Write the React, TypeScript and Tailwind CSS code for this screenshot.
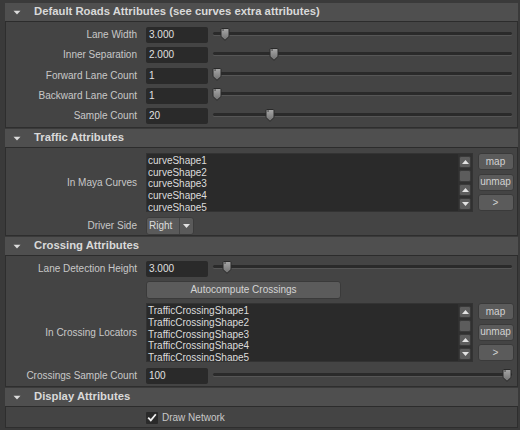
import React from "react";

const FONT = "font-['Liberation_Sans',Arial,sans-serif]";

function Tri() {
  return (
    <svg width="8" height="5" viewBox="0 0 8 5">
      <path d="M0.5 0.8 H7.5 L4 4.4 Z" fill="#dcdcdc" />
    </svg>
  );
}

function Header({ title }: { title: string }) {
  return (
    <div className="h-[19px] shrink-0 bg-[#4f4f4f] border-b border-[#2c2c2c] flex items-center">
      <div className="w-[29px] pl-[8px] flex items-center">
        <Tri />
      </div>
      <span className="text-[11.3px] font-bold text-[#d9d9d9] leading-none">{title}</span>
    </div>
  );
}

function Handle() {
  return (
    <svg width="10" height="13" viewBox="0 0 10 13">
      <defs>
        <linearGradient id="hg" x1="0" y1="0" x2="0" y2="1">
          <stop offset="0" stopColor="#a8a8a8" />
          <stop offset="1" stopColor="#6e6e6e" />
        </linearGradient>
      </defs>
      <path d="M1 1.5 Q1 0.5 2 0.5 H8 Q9 0.5 9 1.5 V8.5 L5 12.3 L1 8.5 Z" fill="url(#hg)" stroke="#2a2a2a" strokeWidth="1" />
      <path d="M2.2 2 H4" stroke="#3a3a3a" strokeWidth="1" />
    </svg>
  );
}

function Slider({ at }: { at: number }) {
  return (
    <div className="relative ml-[5px] mr-[5px] flex-1 h-[16px]">
      <div className="mt-[4.5px] h-[3px] rounded-full bg-[#2a2a2a] shadow-[0_1px_0_#565656]" />
      <div className="absolute top-[0.5px]" style={{ left: at - 5 }}>
        <Handle />
      </div>
    </div>
  );
}

function Label({ children }: { children?: React.ReactNode }) {
  return <div className="w-[131px] shrink-0 text-right text-[10px] text-[#c8c8c8] leading-none">{children}</div>;
}

function Field({ value }: { value: string }) {
  return (
    <div className="ml-[9px] h-[16px] w-[62px] shrink-0 bg-[#2a2a2a] rounded-[2px] flex items-center pl-[3px] text-[10px] text-[#e0e0e0] leading-none">
      {value}
    </div>
  );
}

function SliderRow({ label, value, at }: { label: string; value: string; at: number }) {
  return (
    <div className="flex items-center h-[16px]">
      <Label>{label}</Label>
      <Field value={value} />
      <Slider at={at} />
    </div>
  );
}

function Arrow({ down }: { down?: boolean }) {
  return (
    <svg width="7" height="4" viewBox="0 0 7 4">
      <path d={down ? "M0 0 H7 L3.5 4 Z" : "M0 4 H7 L3.5 0 Z"} fill="#e2e2e2" />
    </svg>
  );
}

function ScrollBtn({ children }: { children?: React.ReactNode }) {
  return (
    <div className="h-[12px] w-[12px] bg-[#5c5c5c] rounded-[2px] border border-[#3a3a3a] flex items-center justify-center">
      {children}
    </div>
  );
}

function Btn({ children }: { children: React.ReactNode }) {
  return (
    <div className="h-[17px] w-[36px] bg-[#5b5b5b] rounded-[3px] border border-[#3a3a3a] flex items-center justify-center text-[10px] text-[#d2d2d2] leading-none">
      {children}
    </div>
  );
}

function ListRow({ label, items }: { label: string; items: string[] }) {
  return (
    <div className="flex items-center">
      <Label>{label}</Label>
      <div className="ml-[9px] flex h-[59px] w-[327px] border border-[#333333] bg-[#2a2a2a]">
        <div className="flex-1 overflow-hidden pl-[1px] text-[10px] leading-[11.7px] text-[#dcdcdc] pt-[1px]">
          {items.map((i) => (
            <div key={i} className="whitespace-nowrap">{i}</div>
          ))}
        </div>
        <div className="w-[14px] bg-[#303030] flex flex-col items-center gap-[2px] pt-[1.5px]">
          <ScrollBtn><Arrow /></ScrollBtn>
          <ScrollBtn />
          <ScrollBtn><Arrow /></ScrollBtn>
          <ScrollBtn><Arrow down /></ScrollBtn>
        </div>
      </div>
      <div className="ml-[4.5px] flex flex-col gap-[3.5px] self-start">
        <Btn>map</Btn>
        <Btn>unmap</Btn>
        <Btn>&gt;</Btn>
      </div>
    </div>
  );
}

const Content = ({ children, className }: { children: React.ReactNode; className: string }) => (
  <div className={"shrink-0 bg-[#444444] border-x border-b border-[#2e2e2e] flex flex-col " + className}>{children}</div>
);

export default function App() {
  return (
    <div className={`${FONT} w-[520px] h-[430px] overflow-hidden bg-[#3a3a3a] pt-[3px] pl-[5px] pr-[2px] flex flex-col`}>
      <Header title="Default Roads Attributes (see curves extra attributes)" />
      <Content className="h-[106px] pt-[5px] gap-[4.33px]">
        <SliderRow label="Lane Width" value="3.000" at={12} />
        <SliderRow label="Inner Separation" value="2.000" at={61} />
        <SliderRow label="Forward Lane Count" value="1" at={4} />
        <SliderRow label="Backward Lane Count" value="1" at={4} />
        <SliderRow label="Sample Count" value="20" at={57} />
      </Content>
      <div className="h-px shrink-0" />
      <Header title="Traffic Attributes" />
      <Content className="h-[88px] pt-[5px] gap-[4.5px]">
        <ListRow label="In Maya Curves" items={["curveShape1", "curveShape2", "curveShape3", "curveShape4", "curveShape5"]} />
        <div className="flex items-center">
          <Label>Driver Side</Label>
          <div className="ml-[9px] h-[18px] w-[48px] rounded-[3px] bg-[#5a5a5a] border border-[#3c3c3c] flex items-center text-[10px] text-[#dcdcdc] leading-none">
            <span className="pl-[2px] w-[32px]">Right</span>
            <div className="w-px h-full bg-[#444444]" />
            <div className="flex-1 flex justify-center">
              <Arrow down />
            </div>
          </div>
        </div>
      </Content>
      <div className="h-px shrink-0" />
      <Header title="Crossing Attributes" />
      <Content className="h-[131px] pt-[4.5px]">
        <SliderRow label="Lane Detection Height" value="3.000" at={14} />
        <div className="flex items-center mt-[4.3px]">
          <Label />
          <div className="ml-[9px] h-[18px] w-[195px] rounded-[3px] bg-[#5b5b5b] border border-[#3a3a3a] flex items-center justify-center text-[10px] text-[#d4d4d4] leading-none">
            Autocompute Crossings
          </div>
        </div>
        <div className="mt-[4.3px]">
          <ListRow
            label="In Crossing Locators"
            items={["TrafficCrossingShape1", "TrafficCrossingShape2", "TrafficCrossingShape3", "TrafficCrossingShape4", "TrafficCrossingShape5"]}
          />
        </div>
        <div className="mt-[6px]">
          <SliderRow label="Crossings Sample Count" value="100" at={294} />
        </div>
      </Content>
      <div className="h-px shrink-0" />
      <Header title="Display Attributes" />
      <Content className="h-[21px] pt-[4.5px]">
        <div className="flex items-center">
          <Label />
          <div className="ml-[9px] h-[12px] w-[12px] bg-[#2a2a2a] rounded-[1px] flex items-center justify-center">
            <svg width="10" height="9" viewBox="0 0 10 9">
              <path d="M1.2 4.6 L3.8 7.4 L8.8 1.2" fill="none" stroke="#f0f0f0" strokeWidth="1.8" />
            </svg>
          </div>
          <span className="ml-[4px] text-[10px] text-[#c8c8c8] leading-none">Draw Network</span>
        </div>
      </Content>
    </div>
  );
}
